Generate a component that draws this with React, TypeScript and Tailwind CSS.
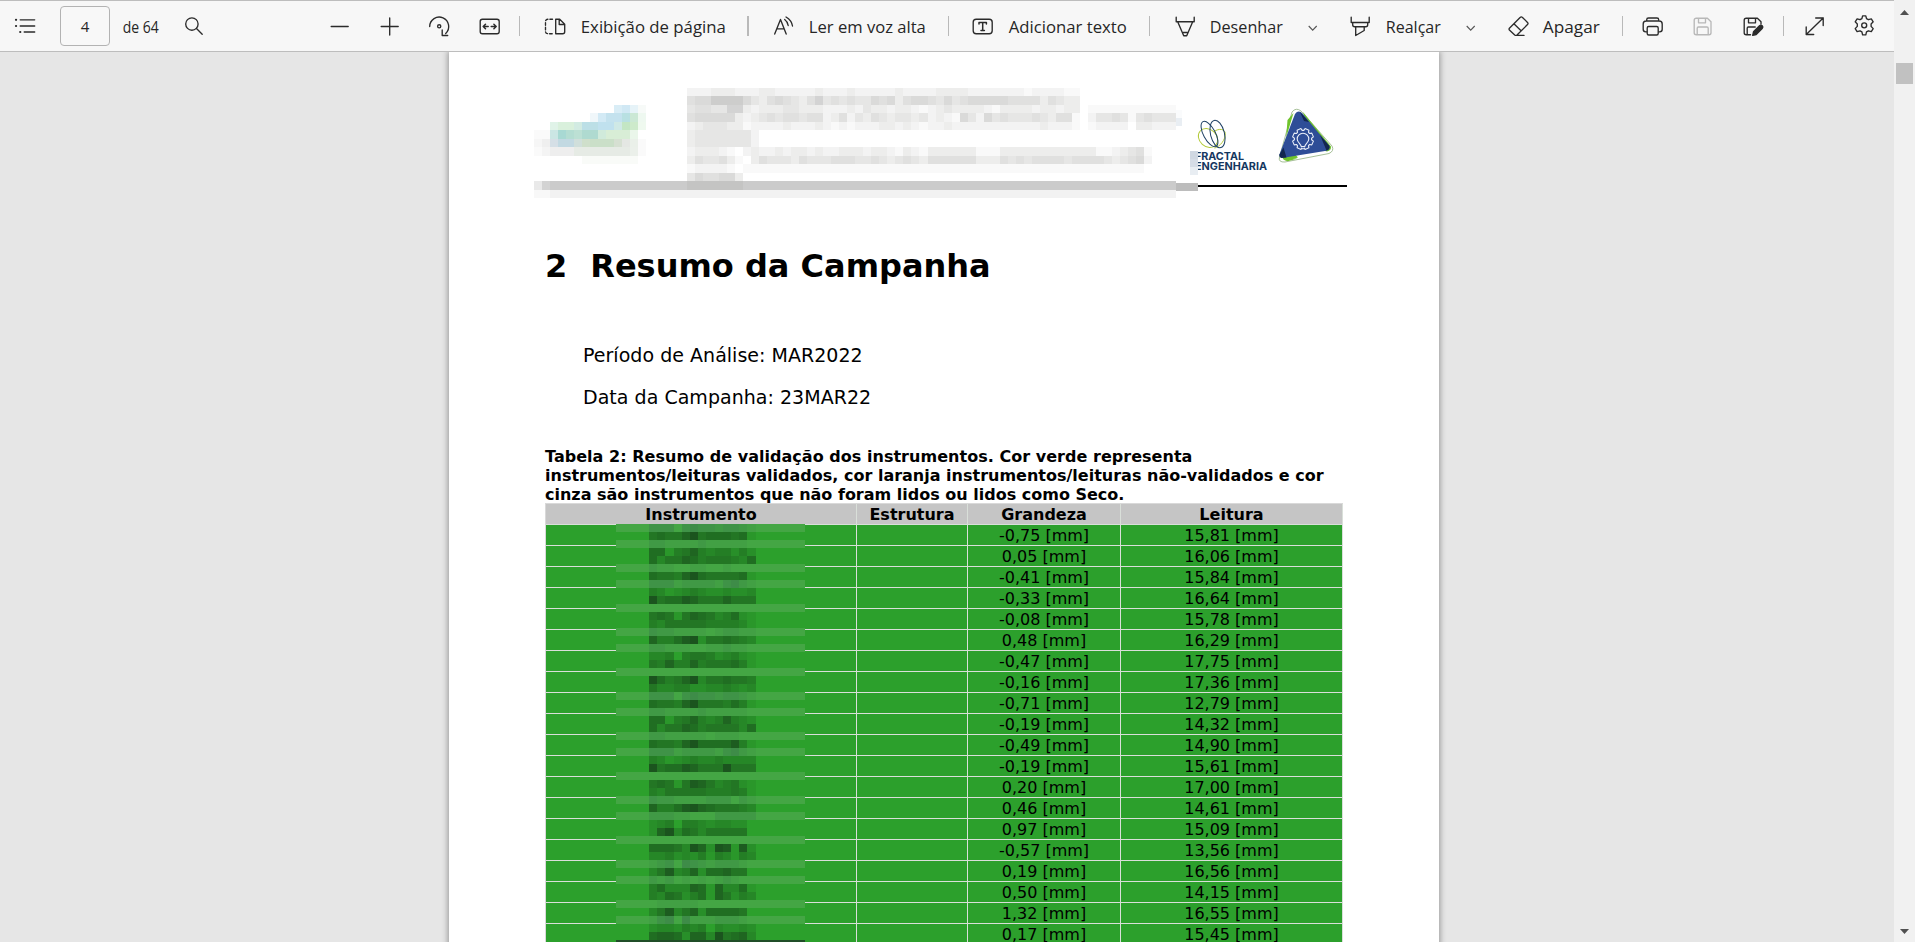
import React from "react";

const ROWS: [string, string][] = [
  ["-0,75", "15,81"],
  ["0,05", "16,06"],
  ["-0,41", "15,84"],
  ["-0,33", "16,64"],
  ["-0,08", "15,78"],
  ["0,48", "16,29"],
  ["-0,47", "17,75"],
  ["-0,16", "17,36"],
  ["-0,71", "12,79"],
  ["-0,19", "14,32"],
  ["-0,49", "14,90"],
  ["-0,19", "15,61"],
  ["0,20", "17,00"],
  ["0,46", "14,61"],
  ["0,97", "15,09"],
  ["-0,57", "13,56"],
  ["0,19", "16,56"],
  ["0,50", "14,15"],
  ["1,32", "16,55"],
  ["0,17", "15,45"],
];

/* Redacted instrument names: one string per 8px row, one digit of darkness per block. */
const MOSAIC = [
  "3330343323321", "5655795666561", "2211112111110", "6614574344242", "6355764555436",
  "2110011001000", "6554796555561", "3331222213421", "4312343223223", "9566875557555",
  "0000000000000", "5651576534621", "4355555444431", "3221111012211", "7446892556543",
  "2211100112110", "3340455423421", "5474474555641", "0000000000000", "9645793556554",
  "5334422334323", "3330343323321", "6554795554641", "2211112111110", "6614574347432",
  "6355764555536", "2211111011100", "6554796666841", "3331222213421", "4312343343333",
  "9566875559555", "0000000000000", "5651587534521", "4355555444541", "3221111222021",
  "7446897655543", "2221100022222", "2340443233220", "2793653555550", "0000000000000",
  "6665397298182", "3342324143143", "1230432122210", "3583472667550", "2120101012100",
  "4633376173361", "4365246175243", "0111110000000", "3583572666650", "1340411122210",
  "2332434032232", "6776277395673",
];
const BANDS = [0, 2, 5, 7, 10, 13, 15, 18, 21, 23, 26, 28, 31, 34, 36, 39, 42, 44, 47, 49];
const COLS = [33, 41, 49, 58, 66, 74, 82, 90, 99, 107, 115, 123, 131, 140];

function Mosaic() {
  return (
    <svg className="absolute left-[70px] top-[20px]" width="189" height="418" shapeRendering="crispEdges">
      <rect width="189" height="416" fill="#2ca02c" />
      {BANDS.map((b) => (
        <rect key={b} y={b * 8} width="189" height="8" fill="#44a644" />
      ))}
      {MOSAIC.map((row, y) =>
        row.split("").map((d, x) =>
          d === "0" ? null : (
            <rect
              key={`${y}-${x}`}
              x={COLS[x]}
              y={y * 8}
              width={COLS[x + 1] - COLS[x]}
              height="8"
              fill={BANDS.includes(y) ? "#305550" : "#143318"}
              opacity={Number(d) * 0.077}
            />
          )
        )
      )}
      <rect y="416" width="189" height="2" fill="#204d28" />
    </svg>
  );
}

const HEADER_TEXT: [number, number, string][] = [
  [88, 8, "2223332223322222322232222232222333322222221222211"],
  [96, 9, "5668888643565435745454465635665464566666555535433"],
  [105, 8, "4554477323334433322232433233212343333213333233233011111111111"],
  [113, 9, "5666663234545545523524354344342321642645444543551024454145444"],
  [122, 8, "2344433122223222321212223323212232222222222232221012222033222"],
  [130, 9, "344444442"],
  [139, 8, "344444442"],
  [147, 9, "2333210232232332322333233213213333331113333333333331123451"],
  [156, 8, "3544531035444354445554454345435555553335454555545555434562"],
  [164, 9, "1222210111111111111111111111111111111111111111111111111110"],
  [173, 8, "4655663"],
];

/* y, height, then [x, width, colour] runs */
const BLUR_LOGO: [number, number, [number, number, string][]][] = [
  [105, 8, [[614, 8, "#d9edf6"], [622, 8, "#d0e8f4"], [630, 8, "#e6f3f8"], [638, 8, "#f7faf8"]]],
  [113, 9, [[590, 8, "#f0f7fa"], [598, 8, "#d3eaf5"], [606, 16, "#c4e2ee"], [622, 8, "#b8e0e2"], [630, 8, "#cbe8d5"], [638, 8, "#eef8f0"]]],
  [122, 8, [[550, 8, "#e0f3e8"], [558, 16, "#d9f0dc"], [574, 8, "#d2ebe2"], [582, 16, "#bcdfe6"], [598, 16, "#c0e1ee"], [614, 8, "#cfe9e6"], [622, 8, "#c3e6c4"], [630, 8, "#cdeacb"], [638, 8, "#eff9ef"]]],
  [130, 9, [[534, 16, "#fafafa"], [550, 8, "#cbe6e4"], [558, 8, "#a8d9d3"], [566, 8, "#b4ddd2"], [574, 8, "#bce0d4"], [582, 16, "#afdad0"], [598, 8, "#d0eadb"], [606, 24, "#d8edd6"], [630, 8, "#eaf6ea"]]],
  [139, 8, [[534, 8, "#f6f6f6"], [542, 8, "#efefef"], [550, 8, "#d5dfe6"], [558, 16, "#c2d9e2"], [574, 8, "#d0dfdb"], [582, 8, "#cfdfcb"], [590, 24, "#cadfc8"], [614, 8, "#d6e0d2"], [622, 8, "#e4e7e3"], [630, 8, "#eaf0e9"], [638, 8, "#fafafa"]]],
  [147, 9, [[534, 8, "#fafafa"], [542, 8, "#f4f4f4"], [550, 24, "#eeeeee"], [574, 56, "#e6ebe5"], [630, 8, "#ebf0ea"], [638, 8, "#fafafa"]]],
  [156, 8, [[582, 56, "#f9fbf8"]]],
];

/* Outline of an eight-toothed cog, open at the bottom where the bulb's base sits. */
function cogPoints(cx: number, cy: number) {
  const pts: string[] = [];
  for (let i = 0; i < 8; i++) {
    const mid = 90 + (i + 0.5) * 45;
    for (const [off, r] of [[-17, 8.6], [-11, 10.6], [11, 10.6], [17, 8.6]]) {
      const a = ((mid + off) * Math.PI) / 180;
      pts.push(`${(cx + r * Math.cos(a)).toFixed(1)},${(cy + r * Math.sin(a)).toFixed(1)}`);
    }
  }
  return pts.join(" ");
}

function Letterhead() {
  return (
    <svg className="block" width="990" height="158" viewBox="449 52 990 158">
      <g shapeRendering="crispEdges">
        {BLUR_LOGO.map(([y, h, runs]) =>
          runs.map(([x, w, c]) => <rect key={`${y}-${x}`} x={x} y={y} width={w} height={h} fill={c} />)
        )}
        <rect x="534" y="181" width="8" height="9" fill="#e9e9e9" />
        <rect x="542" y="181" width="8" height="9" fill="#d3d3d3" />
        <rect x="550" y="181" width="626" height="9" fill="#cbcbcb" />
        <rect x="687" y="181" width="56" height="9" fill="#c4c4c3" />
        <rect x="534" y="190" width="16" height="8" fill="#f8f8f8" />
        <rect x="550" y="190" width="626" height="8" fill="#f2f2f2" />
        {HEADER_TEXT.map(([y, h, row]) =>
          row.split("").map((d, i) => {
            const x = Math.round(687 + i * 8.017);
            const next = Math.round(687 + (i + 1) * 8.017);
            return d === "0" ? null : (
              <rect key={`${y}-${i}`} x={x} y={y} width={next - x} height={h} fill="#3c3c38" opacity={Number(d) * 0.032} />
            );
          })
        )}
        <rect x="1176" y="110" width="6" height="8" fill="#fafbfc" />
        <rect x="1176" y="118" width="6" height="8" fill="#e9eef3" />
      </g>
      <g fill="none" strokeWidth="1">
        <ellipse cx="1208" cy="138" rx="8.500" ry="10.500" transform="rotate(-48 1208 138)" stroke="#b3ca3a" />
        <path d="M1214 131.500c5-3.500 11-2.500 11.300 2 .3 6-5 13-10.800 14.600" stroke="#b3ca3a" />
        <ellipse cx="1209.500" cy="134" rx="6" ry="14" transform="rotate(-28 1209.500 134)" stroke="#1d3f63" />
        <ellipse cx="1217.500" cy="134" rx="7" ry="14" transform="rotate(-14 1217.500 134)" stroke="#1d3f63" />
      </g>
      <g fill="#15375f" fontFamily="Inter, sans-serif" fontWeight="700" fontSize="10.400">
        <text x="1195" y="159.500" textLength="49" lengthAdjust="spacingAndGlyphs">FRACTAL</text>
        <text x="1195" y="170.300" textLength="72" lengthAdjust="spacingAndGlyphs">ENGENHARIA</text>
      </g>
      <g shapeRendering="crispEdges">
        <rect x="1190" y="151" width="8" height="8" fill="#d0d8e2" />
        <rect x="1190" y="159" width="8" height="8" fill="#d5dce6" />
        <rect x="1190" y="167" width="8" height="8" fill="#e8edf2" />
        <rect x="1176" y="183" width="22" height="8" fill="#bcbcbc" />
        <rect x="1198" y="185" width="149" height="2" fill="#000" />
      </g>
      <path d="M1292 112q4-5 9-1l31 35q2.500 5-3 7.500l-44 8.500q-7 .5-5.500-5z" fill="none" stroke="#9cb88c" strokeWidth="0.900" />
      <path d="M1293.500 113l-9 30 3 15 10 .5-9 2.500q-4 .5-4-3l3-38zM1303 112l28 34.500q.5 4-4 5l-14-4z" fill="#6fc32c" />
      <path d="M1284.500 143l-2.500 13q1 5 5 4.500l11-3z" fill="#6fc32c" />
      <path d="M1295 114q3.500-4.500 7.500-.5l26.500 32q1.500 4-2.500 5.200l-43 7q-4.500.3-4-3.500z" fill="#2e4d97" />
      <path d="M1300 112l9 10-5-1zM1320 135l9.500 11q1 3-3 4.500zM1279.500 154.500l4-7 3 10-5 .5q-2.500-1-2-3.500z" fill="#12264e" />
      <g fill="none" stroke="#e9eef8" strokeWidth="1.100" strokeLinejoin="round">
        <polyline points={cogPoints(1303, 139)} />
        <path d="M1301.200 146.500c0-2.500-4-3.500-4-7.500a5.800 5.800 0 0 1 11.600 0c0 4-4 5-4 7.500zM1301.500 148.700h3" />
      </g>
    </svg>
  );
}

function Icon({ className, children, color = "#2b2b2b" }: { className: string; children: React.ReactNode; color?: string }) {
  return (
    <svg
      className={`h-6 w-6 shrink-0 ${className}`}
      viewBox="0.3 0 24 24"
      fill="none"
      stroke={color}
      strokeWidth="1.350"
      strokeLinecap="round"
      strokeLinejoin="round"
    >
      {children}
    </svg>
  );
}

const Sep = ({ className }: { className: string }) => <div className={`h-5 shrink-0 bg-[#b9b9b9] ${className}`} />;

function Label({ className, width, children }: { className: string; width: number; children: string }) {
  return (
    <svg className={`h-6 shrink-0 overflow-visible ${className}`} width={width} height="24">
      <text x="-0.200" y="18.800" fontSize="16.300" fill="#262626" fontFamily="'Open Sans', sans-serif" textLength={width} lengthAdjust="spacingAndGlyphs">
        {children}
      </text>
    </svg>
  );
}

const Chevron = () => (
  <svg className="ml-6 mt-1 h-2 w-2.5 shrink-0" viewBox="0 0 10 8" fill="none" stroke="#555" strokeWidth="1.100">
    <path d="M0.700 2l4 4.200 4-4.200" />
  </svg>
);

function Toolbar() {
  return (
    <div className="flex h-[52px] w-[1894px] items-center border-y border-[#bdbdbd] bg-[#f7f7f7]">
      <Icon className="ml-3.5"><path d="M6.500 5.800h14.500M6.500 12h14.500M10.500 18H21" /><path d="M2.300 5.800h.1M2.300 12h.1M6.500 18h.1" strokeWidth="2.200" /></Icon>
      <div className="ml-[22px] flex h-10 w-[50px] shrink-0 items-center justify-center rounded-sm border border-[#b3b3b3] bg-[#f8f8f8] pt-px font-['Open_Sans',sans-serif] text-[15px] text-[#262626]">4</div>
      <Label className="ml-[13px] mr-1" width={36}>de 64</Label>
      <Icon className="ml-[19px]"><circle cx="10.200" cy="10" r="6.200" /><path d="M14.800 14.500l5.700 5.700" /></Icon>
      <Icon className="ml-[122px]"><path d="M3.500 12.500h17" /></Icon>
      <Icon className="ml-[26px]"><path d="M3.500 12.500h17M12 4v17" /></Icon>
      <Icon className="ml-[26px]"><path d="M2 12.500a9.500 9.500 0 1 1 16 7M14.500 16v5.500H20" /><circle cx="11.500" cy="12.300" r="1.600" /></Icon>
      <Icon className="ml-[26px]"><rect x="2.500" y="5.200" width="19" height="14.500" rx="2.200" /><path d="M5.500 12.500h5M13.500 12.500h5M7.800 10.300l-2.300 2.200 2.300 2.200M16.200 10.300l2.300 2.200-2.300 2.200" strokeWidth="1.500" /></Icon>
      <Sep className="ml-[17px] w-px" />
      <Icon className="ml-[23px]"><path d="M13 5.200h4l5 5v7.500a2 2 0 0 1-2 2h-7zM16.500 5.500v5H22" /><path d="M9.800 5.200H5a2.200 2.200 0 0 0-2.200 2.200v10A2.200 2.200 0 0 0 5 19.700h4.800" strokeDasharray="2.600 2" /></Icon>
      <Label className="ml-3.5" width={145}>Exibição de página</Label>
      <Sep className="ml-[21px] w-0.5" />
      <Icon className="ml-6"><path d="M2 20L7.800 5.500 13.500 20M4.300 14.800h7" /><path d="M12 5.500c2 1.500 3.200 3.500 3.500 6M13.300 3c3.500 2 6 5.500 6.500 9" strokeWidth="1.300" /></Icon>
      <Label className="ml-3" width={117}>Ler em voz alta</Label>
      <Sep className="ml-[22px] w-px" />
      <Icon className="ml-[22px]"><rect x="2.500" y="5.200" width="19" height="14.500" rx="3" /><path d="M8.300 10V8.500h7.400V10M12 8.500v8M10.300 16.500h3.400" strokeWidth="1.500" /></Icon>
      <Label className="ml-3.5" width={118}>Adicionar texto</Label>
      <Sep className="ml-[22px] w-px" />
      <Icon className="ml-6"><path d="M2.500 3.200v4.500h18V3.200M4 7.700l6 14h3l6-14M9.500 18.500h4" /></Icon>
      <Label className="ml-3" width={73}>Desenhar</Label>
      <div className="w-px shrink-0" />
      <Chevron />
      <Icon className="ml-[31px]"><path d="M2.500 3.200v5.300h18V3.200M4 8.500v2.200a2 2 0 0 0 2 2h11a2 2 0 0 0 2-2V8.500M7 12.700v8.800l8.500-5v-3.800" /></Icon>
      <Label className="ml-[13px]" width={55}>Realçar</Label>
      <div className="w-px shrink-0" />
      <Chevron />
      <Icon className="ml-[31px]"><path d="M2.700 14.200L13.400 3.400q1.200-1 2.400 0l5 5q1 1.100 0 2.200L10.300 21q-1.200.8-2.300 0l-5.300-5q-.7-.9 0-1.800zM7.200 9.800l7.200 7M9.500 21.400h7.800" /></Icon>
      <Label className="ml-3" width={57}>Apagar</Label>
      <Sep className="ml-[22px] w-px" />
      <Icon className="ml-[18px]"><path d="M6 17.800H5a2.500 2.500 0 0 1-2.500-2.500V10A3 3 0 0 1 5.500 7h13a3 3 0 0 1 3 3v5.300a2.500 2.500 0 0 1-2.500 2.500h-1M6 7V5.800A1.800 1.800 0 0 1 7.800 4h8.400A1.800 1.800 0 0 1 18 5.800V7" /><rect x="6.500" y="12.500" width="11" height="8.500" rx="1.500" /></Icon>
      <Icon className="ml-[26px]" color="#b8b8b8"><path d="M5.500 4.200h11.200l3.600 3.500v11a2 2 0 0 1-2 2H5.500a2 2 0 0 1-2-2v-12.500a2 2 0 0 1 2-2zM7.800 4.200v4.600h7V4.200M6.500 20.700v-6.500a1.200 1.200 0 0 1 1.200-1.200h8.600a1.200 1.200 0 0 1 1.200 1.200v6.500" /></Icon>
      <Icon className="ml-[26px]"><path d="M20.300 10V7.700l-3.600-3.500H5.500a2 2 0 0 0-2 2v12.500a2 2 0 0 0 2 2h4.300M7.800 4.200v4.600h7V4.200M6.500 20.700v-6.500A1.200 1.200 0 0 1 7.700 13h6.800" /><path d="M12 21.300l.8-3.500 6-6a1.900 1.900 0 0 1 2.700 2.700l-6 6z" fill="#2b2b2b" /></Icon>
      <Sep className="ml-[18px] w-px" />
      <Icon className="ml-[19px]"><path d="M3.500 20.500l17-16.500M13 4h7.500v7.500M3.500 13v7.500H11" /></Icon>
      <Icon className="ml-[26px]">
        <path d="M9.900 1.800h3.200l.7 2.800 1.900 1.100 2.900-.8 1.900 2.900-2.100 2.100v2.500l2.100 2.200-1.900 3-2.900-.8-1.900 1-.7 3H9.900l-.7-3-1.900-1-2.900.8-1.900-3 2.100-2.200V9.900L2.500 7.800l1.900-2.900 2.900.8 1.900-1.100z" />
        <circle cx="11.500" cy="11.300" r="2.500" />
      </Icon>
    </div>
  );
}

const cell = "flex items-center justify-center border-b border-r border-[#d9dfd9] pt-px";

function ResultTable() {
  return (
    <div className="relative ml-24 w-[798px] border-l border-t border-[#d9d9d9] text-base leading-none">
      <div className="grid h-[21px] grid-cols-[311px_111px_153px_222px] bg-[#c5c5c5] font-bold">
        {["Instrumento", "Estrutura", "Grandeza", "Leitura"].map((h) => (
          <div key={h} className={cell}>{h}</div>
        ))}
      </div>
      {ROWS.map(([g, l], i) => (
        <div key={i} className="grid h-[21px] grid-cols-[311px_111px_153px_222px] bg-[#2ca02c]">
          <div className={cell} />
          <div className={cell} />
          <div className={cell}>{g} [mm]</div>
          <div className={cell}>{l} [mm]</div>
        </div>
      ))}
      <Mosaic />
    </div>
  );
}

export default function App() {
  return (
    <div className="flex h-[942px] w-[1915px] overflow-hidden bg-[#e6e6e6]">
      <div className="flex w-[1894px] shrink-0 flex-col">
        <Toolbar />
        <main className="h-[890px] overflow-hidden">
          <article className="ml-[449px] h-[900px] w-[990px] bg-white font-['DejaVu_Sans',sans-serif] text-black shadow-[0_0_6px_1px_rgba(0,0,0,0.35)]">
            <Letterhead />
            <h1 className="ml-24 flex h-[112px] gap-[23px] pt-[37px] text-[32px] font-bold leading-[38px]">
              <span>2</span>
              <span>Resumo da Campanha</span>
            </h1>
            <div className="ml-[134px] h-[125px] pt-3 text-[19px] leading-[42px] tracking-[0.030px]">
              <p>Período de Análise: MAR2022</p>
              <p>Data da Campanha: 23MAR22</p>
            </div>
            <p className="ml-24 h-14 whitespace-nowrap text-base font-bold leading-[19px]">
              <span className="tracking-[0.030px]">Tabela 2: Resumo de validação dos instrumentos. Cor verde representa</span>
              <br />
              instrumentos/leituras validados, cor laranja instrumentos/leituras não-validados e cor
              <br />
              cinza são instrumentos que não foram lidos ou lidos como Seco.
            </p>
            <ResultTable />
          </article>
        </main>
      </div>
      <div className="flex w-[21px] shrink-0 flex-col items-center bg-[#f1f1f1]">
        <svg className="mt-2.5 shrink-0" width="9" height="5"><path d="M0 5L4.500 0 9 5z" fill="#505050" /></svg>
        <div className="mt-12 h-[21px] w-[17px] shrink-0 bg-[#c1c1c1]" />
        <svg className="mb-2 mt-auto shrink-0" width="9" height="5"><path d="M0 0L4.500 5 9 0z" fill="#505050" /></svg>
      </div>
    </div>
  );
}
